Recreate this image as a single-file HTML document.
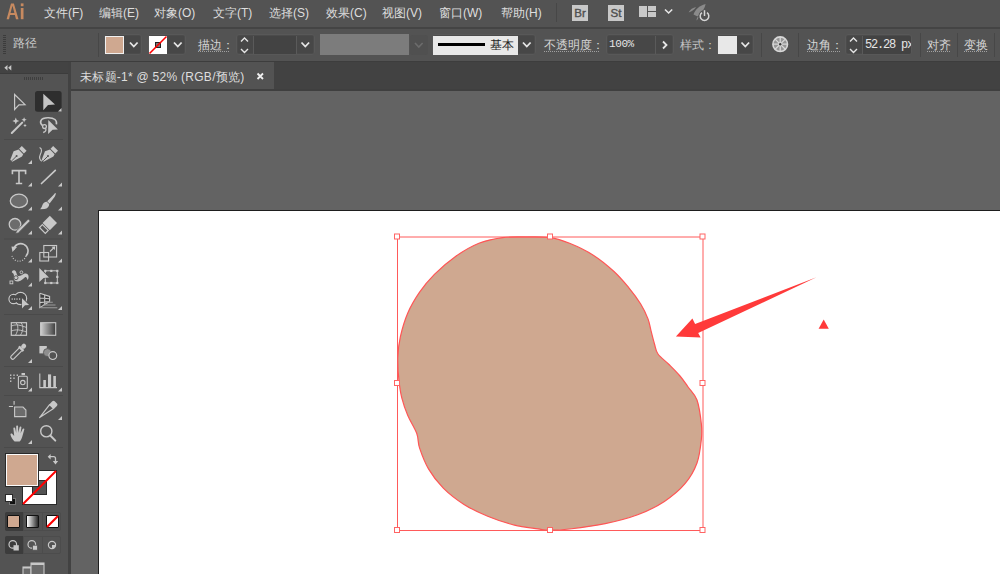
<!DOCTYPE html>
<html><head><meta charset="utf-8">
<style>
*{margin:0;padding:0;box-sizing:border-box}
html,body{width:1000px;height:574px;overflow:hidden}
body{background:#636363;font-family:"Liberation Sans",sans-serif;position:relative;color:#dcdcdc}
.a{position:absolute}
.mi{position:absolute;top:5px;font-size:12px;color:#dedede;white-space:nowrap;line-height:16px}
.cl{position:absolute;top:37px;font-size:12px;color:#d6d6d6;white-space:nowrap;line-height:16px}
.ul{position:absolute;top:51px;height:1px;background:repeating-linear-gradient(to right,#a0a0a0 0 1px,transparent 1px 2px)}
.box{position:absolute;background:#474747;border:1px solid #585858;box-shadow:inset 0 0 0 0.6px #505050;border-radius:3px}
.sep{position:absolute;width:1px;background:#474747}
.tsep{position:absolute;left:4px;width:59px;height:1px;background:#4a4a4a}
svg{position:absolute;overflow:visible}
</style></head><body>
<!-- menubar -->
<div class="a" style="left:0;top:0;width:1000px;height:27px;background:#535353"></div>
<div class="a" style="left:0;top:27px;width:1000px;height:2px;background:#444"></div>
<svg style="left:0;top:0" width="1" height="1"><g fill="#c78a60"><path d="M6.6,19.2 L11,3.4 L13.9,3.4 L18.5,19.2 L16,19.2 L14.9,15 L10,15 L9,19.2 Z M10.5,12.9 L14.4,12.9 L12.45,5.8 Z" fill-rule="evenodd"/><rect x="20.8" y="8" width="2.7" height="11.2"/><rect x="20.8" y="3.4" width="2.7" height="2.8"/></g></svg>
<div class="mi" style="left:44px">文件(F)</div>
<div class="mi" style="left:99px">编辑(E)</div>
<div class="mi" style="left:154px">对象(O)</div>
<div class="mi" style="left:213px">文字(T)</div>
<div class="mi" style="left:269px">选择(S)</div>
<div class="mi" style="left:326px">效果(C)</div>
<div class="mi" style="left:382px">视图(V)</div>
<div class="mi" style="left:439px">窗口(W)</div>
<div class="mi" style="left:501px">帮助(H)</div>
<!-- control bar -->
<div class="a" style="left:0;top:29px;width:1000px;height:32px;background:#535353"></div>
<div class="a" style="left:0;top:61px;width:1000px;height:1px;background:#3d3d3d"></div>
<!-- menubar right icons -->
<div class="a" style="left:556px;top:3px;width:1px;height:19px;background:#474747"></div>
<div class="a" style="left:572px;top:5px;width:16px;height:16px;background:#c8c8c8;color:#505050;-webkit-text-stroke:0.4px #505050;font-size:11.5px;line-height:17px;text-align:center">Br</div>
<div class="a" style="left:608px;top:5px;width:16px;height:16px;background:#c8c8c8;color:#505050;-webkit-text-stroke:0.4px #505050;font-size:11.5px;line-height:17px;text-align:center">St</div>
<div class="a" style="left:639px;top:6px;width:8px;height:11px;background:#c8c8c8"></div>
<div class="a" style="left:648px;top:6px;width:8px;height:5px;background:#c8c8c8"></div>
<div class="a" style="left:648px;top:12px;width:8px;height:5px;background:#c8c8c8"></div>
<svg style="left:0;top:0" width="1" height="1"><path d="M665,9.5 L668.6,13 L672.2,9.5" fill="none" stroke="#e6e6e6" stroke-width="1.6"/>
<path d="M693.5,14.5 C695,10 699,5.5 705.6,4 C705,8 702.5,12 697.5,16.5 Z" fill="#8a8a8a"/>
<path d="M688.6,12.6 C690,9.5 693,7.5 696.2,7 C694.5,9.5 692,11.5 688.6,12.6 Z" fill="#8a8a8a"/>
<path d="M696.6,20.5 C696.5,19 697,17.5 698.4,16.6 C698.5,18 698,19.5 696.6,20.5 Z" fill="#8a8a8a"/>
<circle cx="704.5" cy="16.1" r="6" fill="#535353"/>
<path d="M702,12.6 A4.3,4.3 0 1 0 707,12.6" fill="none" stroke="#d6d6d6" stroke-width="1.5"/>
<path d="M704.5,10.2 L704.5,16" stroke="#d6d6d6" stroke-width="1.5"/>
</svg>
<!-- control bar items -->
<div class="a" style="left:3px;top:35px;width:3px;height:19px;background:repeating-linear-gradient(to bottom,#3c3c3c 0 1px,transparent 1px 2px)"></div>
<div class="cl" style="left:13px;top:35px;color:#c8c8c8">路径</div>
<div class="sep" style="left:98px;top:33px;height:24px"></div>
<div class="box" style="left:104px;top:34px;width:38px;height:21px"></div>
<div class="a" style="left:105px;top:36px;width:19px;height:18px;background:#cfa890;border:1px solid #f0f0f0"></div>
<div class="box" style="left:148px;top:34px;width:38px;height:21px"></div>
<div class="a" style="left:149px;top:36px;width:18px;height:18px;background:#fff;overflow:hidden"></div>
<svg style="left:0;top:0" width="1" height="1">
<path d="M130,42.5 L133.8,46.5 L137.6,42.5" fill="none" stroke="#e6e6e6" stroke-width="1.8"/>
<path d="M174,42.5 L177.8,46.5 L181.6,42.5" fill="none" stroke="#e6e6e6" stroke-width="1.8"/>
<rect x="155.5" y="42.5" width="5" height="5" fill="#777" stroke="#222" stroke-width="1"/>
<path d="M149.5,53.5 L166.5,36.5" stroke="#f00" stroke-width="1.6"/>
</svg>
<div class="cl" style="left:198px">描边：</div><div class="ul" style="left:198px;width:31px"></div>
<div class="box" style="left:236px;top:34px;width:79px;height:21px"></div>
<div class="a" style="left:253px;top:36px;width:44px;height:18px;background:#434343;border-left:1px solid #5a5a5a;border-right:1px solid #5a5a5a"></div>
<svg style="left:0;top:0" width="1" height="1">
<path d="M241,41.5 L244.5,38 L248,41.5" fill="none" stroke="#e6e6e6" stroke-width="1.4"/>
<path d="M241,49 L244.5,52.5 L248,49" fill="none" stroke="#e6e6e6" stroke-width="1.4"/>
<path d="M301.5,42.5 L305.3,46.5 L309.1,42.5" fill="none" stroke="#e6e6e6" stroke-width="1.8"/>
</svg>
<div class="a" style="left:320px;top:34px;width:89px;height:21px;background:#7c7c7c"></div>
<div class="a" style="left:410px;top:35px;width:18px;height:20px;background:#505050;border-radius:3px"></div>
<svg style="left:0;top:0" width="1" height="1"><path d="M415,43 L418.8,47 L422.6,43" fill="none" stroke="#6c6c6c" stroke-width="1.6"/></svg>
<div class="box" style="left:432px;top:34px;width:104px;height:21px"></div>
<div class="a" style="left:433px;top:35.5px;width:85px;height:19px;background:#e8e8e8"></div>
<div class="a" style="left:438px;top:43px;width:47px;height:3px;background:#000"></div>
<div class="cl" style="left:490px;top:37px;color:#222">基本</div>
<svg style="left:0;top:0" width="1" height="1"><path d="M523,42.5 L526.8,46.5 L530.6,42.5" fill="none" stroke="#e6e6e6" stroke-width="1.8"/></svg>
<div class="cl" style="left:544px">不透明度：</div><div class="ul" style="left:544px;width:55px"></div>
<div class="box" style="left:606px;top:34px;width:68px;height:21px"></div>
<div class="a" style="left:655px;top:36px;width:1px;height:18px;background:#5a5a5a"></div>
<div class="a" style="left:609px;top:36px;font-family:'Liberation Mono',monospace;font-size:11px;letter-spacing:-0.4px;line-height:16px;color:#e6e6e6">100%</div>
<svg style="left:0;top:0" width="1" height="1"><path d="M663,41.5 L666.5,45 L663,48.5" fill="none" stroke="#e6e6e6" stroke-width="1.8"/></svg>
<div class="cl" style="left:680px;color:#c4c4c4">样式：</div>
<div class="box" style="left:717px;top:34px;width:37px;height:21px"></div>
<div class="a" style="left:718px;top:36px;width:19px;height:18px;background:#e8e8e8"></div>
<svg style="left:0;top:0" width="1" height="1"><path d="M741.5,42.5 L745.3,46.5 L749.1,42.5" fill="none" stroke="#e6e6e6" stroke-width="1.8"/></svg>
<div class="sep" style="left:761px;top:33px;height:24px"></div>
<svg style="left:0;top:0" width="1" height="1">
<circle cx="780.2" cy="44.2" r="7.3" fill="#959595" stroke="#d8d8d8" stroke-width="1.6"/>
<g stroke="#d8d8d8" stroke-width="1.3">
<path d="M780.2,37 V51.4 M773,44.2 H787.4 M775.1,39.1 L785.3,49.3 M785.3,39.1 L775.1,49.3"/>
</g>
<circle cx="780.2" cy="44.2" r="1.2" fill="#3a3a3a"/>
</svg>
<div class="sep" style="left:798px;top:33px;height:24px"></div>
<div class="cl" style="left:807px">边角：</div><div class="ul" style="left:807px;width:33px"></div>
<div class="box" style="left:845px;top:34px;width:67px;height:21px"></div>
<div class="a" style="left:862px;top:36px;width:49px;height:18px;background:#434343;border-left:1px solid #5a5a5a;border-radius:0 2px 2px 0"></div>
<svg style="left:0;top:0" width="1" height="1">
<path d="M850,41.5 L853.5,38 L857,41.5" fill="none" stroke="#e6e6e6" stroke-width="1.4"/>
<path d="M850,49 L853.5,52.5 L857,49" fill="none" stroke="#e6e6e6" stroke-width="1.4"/>
</svg>
<div class="a" style="left:865px;top:37px;font-family:'Liberation Mono',monospace;font-size:12px;letter-spacing:-1.2px;line-height:16px;color:#e6e6e6;width:46px;overflow:hidden;white-space:nowrap">52.28 px</div>
<div class="sep" style="left:920px;top:33px;height:24px"></div>
<div class="cl" style="left:927px">对齐</div><div class="ul" style="left:927px;width:24px"></div>
<div class="sep" style="left:957px;top:33px;height:24px"></div>
<div class="cl" style="left:964px">变换</div><div class="ul" style="left:964px;width:24px"></div>
<div class="sep" style="left:994px;top:33px;height:24px"></div>
<!-- left panel -->
<div class="a" style="left:0;top:62px;width:68px;height:11px;background:#434343"></div>
<div class="a" style="left:0;top:73px;width:68px;height:1px;background:#3c3c3c"></div>
<div class="a" style="left:0;top:74px;width:68px;height:500px;background:#535353"></div>
<div class="a" style="left:68px;top:62px;width:3px;height:512px;background:#424242"></div>
<!-- tools -->
<div class="a" style="left:4px;top:66px;width:8px;height:5px"></div>
<svg style="left:0;top:0" width="1" height="1">
<path d="M7.5,65 L4.3,67.7 L7.5,70.4 Z M11.3,65 L8.1,67.7 L11.3,70.4 Z" fill="#c8c8c8"/>
<rect x="23" y="77" width="20" height="3" fill="url(#grip)"/>
<defs><pattern id="grip" width="2" height="3" patternUnits="userSpaceOnUse"><rect width="1" height="3" fill="#3e3e3e"/></pattern></defs>
<g fill="#4a4a4a">
<rect x="4" y="139" width="59" height="1"/>
<rect x="4" y="238.5" width="59" height="1"/>
<rect x="4" y="314" width="59" height="1"/>
<rect x="4" y="366" width="59" height="1"/>
<rect x="4" y="395" width="59" height="1"/>
<rect x="4" y="447" width="59" height="1"/>
</g>
<rect x="35" y="91" width="26.6" height="20.7" rx="2.5" fill="#2e2e2e"/>
<g fill="#c8c8c8" stroke="none">
<path d="M58,111.5 L61.5,111.5 L61.5,108 Z"/>
<path d="M28,164 L32,164 L32,160 Z"/>
<path d="M28,186.5 L32,186.5 L32,182.5 Z"/><path d="M58,186.5 L62,186.5 L62,182.5 Z"/>
<path d="M28,210.5 L32,210.5 L32,206.5 Z"/><path d="M58,210.5 L62,210.5 L62,206.5 Z"/>
<path d="M28,234.5 L32,234.5 L32,230.5 Z"/><path d="M58,234.5 L62,234.5 L62,230.5 Z"/>
<path d="M28,262.5 L32,262.5 L32,258.5 Z"/><path d="M58,262.5 L62,262.5 L62,258.5 Z"/>
<path d="M28,286.5 L32,286.5 L32,282.5 Z"/>
<path d="M28,310 L32,310 L32,306 Z"/><path d="M58,310 L62,310 L62,306 Z"/>
<path d="M28,363 L32,363 L32,359 Z"/>
<path d="M28,391.5 L32,391.5 L32,387.5 Z"/><path d="M58,391.5 L62,391.5 L62,387.5 Z"/>
<path d="M58,420 L62,420 L62,416 Z"/>
<path d="M28,444 L32,444 L32,440 Z"/>
</g>
<!-- row1 -->
<path d="M14.6,94.5 L25,104.6 L19,104.8 L14.6,109.5 Z" fill="none" stroke="#c8c8c8" stroke-width="1.2" stroke-linejoin="miter"/>
<path d="M43.3,93.7 L55,104.5 L48,105 L43.3,110.2 Z" fill="#c4c4c4"/>
<!-- row2 magic wand -->
<path d="M11.8,133 L22.2,122.6" stroke="#c8c8c8" stroke-width="2" stroke-linecap="round"/>
<path d="M15.8,117.5 L16.8,120 L19.3,121 L16.8,122 L15.8,124.5 L14.8,122 L12.3,121 L14.8,120 Z" fill="#c8c8c8"/>
<path d="M24.1,117.2 L24.9,119 L26.7,119.8 L24.9,120.6 L24.1,122.4 L23.3,120.6 L21.5,119.8 L23.3,119 Z" fill="#c8c8c8"/>
<path d="M25,123.8 L25.6,125 L26.8,125.5 L25.6,126 L25,127.2 L24.4,126 L23.2,125.5 L24.4,125 Z" fill="#c8c8c8"/>
<!-- lasso -->
<path d="M42.6,125.6 C39,122.5 40,117.8 48,117.7 C54.5,117.6 57.2,120.4 56.4,124.4" fill="none" stroke="#c8c8c8" stroke-width="1.6"/>
<circle cx="44.5" cy="126.6" r="1.9" fill="none" stroke="#c8c8c8" stroke-width="1.3"/>
<path d="M45.4,128.2 C46.6,130 45.8,131.8 43.2,132.5" fill="none" stroke="#c8c8c8" stroke-width="1.3"/>
<path d="M48.3,120 L57.9,129.5 L52.6,129.8 L48.1,133.9 Z" fill="#c8c8c8" stroke="#535353" stroke-width="1.2" paint-order="stroke"/>
<!-- row3 pen -->
<g fill="#c8c8c8">
<path d="M21.8,146 L26.6,150.8 L23.9,153.5 L19.1,148.7 Z"/>
<path d="M18.6,149.6 L23.2,154.2 L22,156.4 L12.3,161.8 L10.3,159.7 L13.6,151.3 Z"/>
<path d="M53.2,146 L58,150.8 L55.3,153.5 L50.5,148.7 Z"/>
<path d="M50,149.6 L54.6,154.2 L53.4,156.4 L43.7,161.8 L41.7,159.7 L45,151.3 Z"/>
</g>
<path d="M11.8,160.8 L16.6,156" stroke="#535353" stroke-width="1"/>
<circle cx="16.6" cy="156" r="1" fill="#535353"/>
<path d="M43.2,160.8 L48,156" stroke="#535353" stroke-width="1"/>
<circle cx="48" cy="156" r="1" fill="#535353"/>
<path d="M39.6,147.4 C42.5,148.5 41.5,152 40.3,154.5 C39,157.5 40,160 41.8,161.3" fill="none" stroke="#c8c8c8" stroke-width="1.1"/>
<!-- row4 type -->
<path d="M12.4,174.3 L12.4,170.6 L25.6,170.6 L25.6,174.3 M19,170.6 L19,183.5 M15.8,183.5 L22.2,183.5" fill="none" stroke="#c8c8c8" stroke-width="1.6"/>
<path d="M41.5,183.5 L55.3,170.3" stroke="#c8c8c8" stroke-width="1.7" stroke-linecap="round"/>
<!-- row5 ellipse / brush -->
<ellipse cx="18.9" cy="200.9" rx="8.6" ry="6.7" fill="#6c6c6c" stroke="#c8c8c8" stroke-width="1.3"/>
<path d="M55.6,193 C56.3,193.6 55.5,196 53,199 L49.6,203.4 L47.2,201.2 L51.5,197 C54,194.5 55,192.6 55.6,193 Z" fill="#c8c8c8"/>
<path d="M46.8,201.8 L49.2,204 C49.3,206.5 47.5,208.6 44.5,209 L40.2,209.2 C41.5,208 42,206 42.8,204.3 C43.6,202.6 45.3,201.6 46.8,201.8 Z" fill="#c8c8c8"/>
<!-- row6 shaper / eraser -->
<circle cx="15" cy="224.3" r="5.8" fill="#6c6c6c" stroke="#c8c8c8" stroke-width="1.3"/>
<path d="M28.3,219 L30.3,221 L18.4,232.9 L15.6,233.6 L16.4,230.9 Z" fill="#c8c8c8" stroke="#535353" stroke-width="0.8"/>
<path d="M49.8,215.8 L57,223 L49.8,230.2 L42.6,223 Z" fill="#c8c8c8"/>
<path d="M42.4,224.6 L48.2,230.4 L45.3,233.3 L39.5,227.5 Z" fill="none" stroke="#c8c8c8" stroke-width="1.2"/>
<!-- row7 rotate / scale -->
<path d="M13.5,250 A7.3,7.3 0 1 1 26,256" fill="none" stroke="#c8c8c8" stroke-width="1.6"/>
<path d="M11.5,246.5 L17,247 L12.5,252 Z" fill="#c8c8c8"/>
<path d="M26,256 A7.3,7.3 0 0 1 12,256" fill="none" stroke="#c8c8c8" stroke-width="1.2" stroke-dasharray="1,1.5"/>
<rect x="43.8" y="245.5" width="12.8" height="11.5" fill="none" stroke="#c8c8c8" stroke-width="1.1"/>
<rect x="39.8" y="252.5" width="8.8" height="8.5" fill="none" stroke="#c8c8c8" stroke-width="1.1"/>
<path d="M50,251.5 L54.6,247" stroke="#c8c8c8" stroke-width="1.1"/>
<path d="M55.2,246.4 L51.5,246.8 L54.8,250.1 Z" fill="#c8c8c8"/>
<!-- row8 puppet / free transform -->
<path d="M11.8,272.3 C12,269.8 14.8,269.4 15.9,271.6 C16.8,273.6 16.8,275.2 18.2,276 C20.2,276.4 22.2,274.8 24,273.8 C26.2,272.8 28.2,273.8 28.5,276 C28.7,278 28.2,279.4 27.6,280 C27.2,278.2 26.4,276.6 25.2,277 C23.6,278.4 21.6,281 18.2,281.4 C15.2,281.6 13.6,280.2 13.8,278.2 C14,276 14.6,274 11.8,272.3 Z" fill="#c8c8c8"/>
<circle cx="16" cy="277.7" r="2" fill="#c8c8c8" stroke="#535353" stroke-width="0.9"/>
<path d="M17.5,276.2 L20.4,273.3" stroke="#535353" stroke-width="0.9"/>
<circle cx="21.4" cy="272.3" r="1.4" fill="#535353" stroke="#c8c8c8" stroke-width="0.9"/>
<rect x="10" y="281" width="2.8" height="2.8" fill="#535353" stroke="#c8c8c8" stroke-width="0.9"/>
<rect x="45.3" y="270.8" width="12" height="12.2" fill="none" stroke="#c8c8c8" stroke-width="1"/>
<g fill="#c8c8c8"><rect x="44.2" y="269.8" width="2.2" height="2.2"/><rect x="50.2" y="269.8" width="2.2" height="2.2"/><rect x="56.2" y="269.8" width="2.2" height="2.2"/><rect x="56.2" y="275.8" width="2.2" height="2.2"/><rect x="44.2" y="281.9" width="2.2" height="2.2"/><rect x="50.2" y="281.9" width="2.2" height="2.2"/><rect x="56.2" y="281.9" width="2.2" height="2.2"/></g>
<path d="M39.3,268 L49,277.5 L43.6,277.9 L39.3,282 Z" fill="#c8c8c8" stroke="#535353" stroke-width="1.4" paint-order="stroke"/>
<!-- row9 shape builder / perspective -->
<circle cx="13.6" cy="299" r="4.6" fill="none" stroke="#c8c8c8" stroke-width="1.3"/>
<circle cx="20.5" cy="298.4" r="6.1" fill="none" stroke="#c8c8c8" stroke-width="1.3"/>
<circle cx="13.6" cy="299" r="3.95" fill="#4a4a4a"/>
<circle cx="20.5" cy="298.4" r="5.45" fill="#4a4a4a"/>
<g fill="#c8c8c8"><rect x="11.6" y="298.4" width="1.2" height="1.3"/><rect x="14" y="298.4" width="1.2" height="1.3"/><rect x="16.4" y="298.4" width="1.2" height="1.3"/><rect x="19" y="298.4" width="1.2" height="1.3"/></g>
<path d="M22,298.2 L29.1,304.9 L25,305.3 L22,308.6 Z" fill="#c8c8c8" stroke="#535353" stroke-width="1.2" paint-order="stroke"/>
<path d="M39.8,293.2 L49.6,296.4 L49.6,301.5 L39.8,307.6 Z" fill="#3e3e3e"/>
<path d="M39.8,293.2 L49.6,296.4 L49.6,301.5 M39.8,293.2 L39.8,307.6 L49.6,301.5 M44.7,294.8 L44.7,304.6 M39.8,298 L49.6,298.8 M39.8,302.6 L49.6,301.5" fill="none" stroke="#c8c8c8" stroke-width="1.1"/>
<path d="M45,302.2 L52.8,302.2 M43,305 L55.5,305 M40.5,307.7 L57.3,307.7" stroke="#9a9a9a" stroke-width="1.1"/>
<!-- row10 mesh / gradient -->
<rect x="11.3" y="322.7" width="15.2" height="12.6" fill="none" stroke="#c8c8c8" stroke-width="1.2"/>
<path d="M11.5,326 C16,324 20,325 26.5,327.5 M11.5,331 C16,329 21,330 26.5,332 M16,322.8 C19,326 18,331 15.5,335.2 M21,322.8 C24,326 23,331 20.5,335.2" fill="none" stroke="#c8c8c8" stroke-width="0.9"/>
<defs><linearGradient id="gr" x1="0" x2="1"><stop offset="0" stop-color="#d0d0d0"/><stop offset="1" stop-color="#3c3c3c"/></linearGradient></defs>
<rect x="40.6" y="322.7" width="15.1" height="12.6" fill="url(#gr)" stroke="#c8c8c8" stroke-width="1.1"/>
<!-- row11 eyedropper / blend -->
<g transform="translate(24.6,345.3) rotate(45)">
<rect x="-2.2" y="-1.2" width="4.4" height="5" rx="2" fill="#c8c8c8"/>
<rect x="-3.3" y="3.6" width="6.6" height="2.4" rx="0.6" fill="#c8c8c8"/>
<path d="M-1.9,6 L-1.9,17.2 C-1.9,19.2 1.9,19.2 1.9,17.2 L1.9,6" fill="none" stroke="#c8c8c8" stroke-width="1.2"/>
</g>
<rect x="39.4" y="346" width="7.4" height="7.4" fill="#c8c8c8"/>
<circle cx="47.4" cy="352.6" r="4" fill="#8e8e8e" stroke="#535353" stroke-width="0.8"/>
<circle cx="52.8" cy="355.6" r="3.9" fill="#535353" stroke="#c8c8c8" stroke-width="1.2"/>
<!-- row12 symbol sprayer / graph -->
<g fill="#c8c8c8">
<rect x="10" y="374.5" width="1.4" height="1.4"/><rect x="13.3" y="374.5" width="1.4" height="1.4"/><rect x="16.6" y="374.5" width="1.4" height="1.4"/>
<rect x="10" y="377.5" width="1.4" height="1.4"/><rect x="13.3" y="377.5" width="1.4" height="1.4"/>
<rect x="10" y="380.5" width="1.4" height="1.4"/>
<rect x="21.5" y="373" width="3.5" height="2.2"/>
</g>
<rect x="18.4" y="376.3" width="8.9" height="12.2" rx="1" fill="none" stroke="#c8c8c8" stroke-width="1.1"/>
<circle cx="22.8" cy="382.6" r="2.2" fill="none" stroke="#c8c8c8" stroke-width="1.1"/>
<path d="M39.8,373.4 L39.8,387.6 L57,387.6" fill="none" stroke="#c8c8c8" stroke-width="1.1"/>
<rect x="43.3" y="380" width="2.6" height="7.5" fill="#c8c8c8"/>
<rect x="48" y="374.4" width="3.1" height="13.1" fill="#c8c8c8"/>
<rect x="53.3" y="376" width="2.6" height="11.5" fill="#c8c8c8"/>
<!-- row13 artboard / slice -->
<path d="M14.1,401 L14.1,404.8 M8.9,406.5 L13,406.5" stroke="#c8c8c8" stroke-width="1.1"/>
<path d="M14.6,407 L23,407 L25.9,410 L25.9,416.6 L14.6,416.6 Z" fill="#6c6c6c" stroke="#c8c8c8" stroke-width="1.1"/>
<path d="M49.6,404.6 L53.6,408.6 L39.6,417.6 Z" fill="none" stroke="#c8c8c8" stroke-width="1.2" stroke-linejoin="round"/>
<path d="M52.3,401.3 C53,400.6 54,400.6 54.7,401.3 L56.9,403.5 C57.6,404.2 57.6,405.2 56.9,405.9 L53.8,409 L49.2,404.4 Z" fill="#c8c8c8"/>
<!-- row14 hand / zoom -->
<path d="M14.6,441.6 C12.6,439.6 11,437 10.5,434.8 C10.2,433.6 11.6,433 12.4,434 L14.2,436 L13.4,428.5 C13.2,427.2 15,427 15.2,428.2 L16.2,433 L16.2,426.4 C16.2,425.1 18.1,425.1 18.1,426.4 L18.2,432.8 L19.6,427.2 C19.9,426 21.6,426.3 21.4,427.6 L20.6,433.2 L22.6,429 C23.1,427.9 24.7,428.4 24.3,429.6 L22.6,435.5 C22,438 21,440.3 19.6,441.6 Z" fill="#c8c8c8"/>
<circle cx="46.3" cy="431.3" r="5.6" fill="none" stroke="#c8c8c8" stroke-width="1.4"/>
<path d="M50.3,435.5 L55.3,440.6" stroke="#c8c8c8" stroke-width="2" stroke-linecap="round"/>
</svg>
<!-- color swatches -->
<svg style="left:0;top:0" width="1" height="1">
<path d="M50,456.7 L53.6,456.7 C54.8,456.7 55.5,457.4 55.5,458.6 L55.5,461.5" fill="none" stroke="#c8c8c8" stroke-width="1.3"/>
<path d="M47.7,456.7 L50.6,454 L50.6,459.4 Z" fill="#c8c8c8"/>
<path d="M52.8,461 L58.1,461 L55.5,464.6 Z" fill="#c8c8c8"/>
</svg>
<div class="a" style="left:22px;top:470px;width:35px;height:35px;background:#2a2a2a"></div>
<div class="a" style="left:23px;top:471px;width:33px;height:33px;background:#fff"></div>
<div class="a" style="left:32px;top:480px;width:15px;height:15px;background:#535353;border:1px solid #2a2a2a"></div>
<svg style="left:0;top:0" width="1" height="1"><path d="M23,504 L56,471" stroke="#f00" stroke-width="2"/></svg>
<div class="a" style="left:4.5px;top:452.5px;width:34.5px;height:34.5px;background:#2a2a2a"></div>
<div class="a" style="left:5.5px;top:453.5px;width:32.5px;height:32.5px;background:#fbfbfb"></div>
<div class="a" style="left:6.5px;top:454.5px;width:30.5px;height:30.5px;background:#cfa890"></div>
<div class="a" style="left:8.5px;top:497.5px;width:7px;height:7px;background:#111;border:1px solid #777"></div>
<div class="a" style="left:4.5px;top:493.5px;width:8px;height:8px;background:#fff;border:1px solid #2a2a2a"></div>
<!-- mode buttons -->
<div class="a" style="left:5px;top:512px;width:56px;height:19px;border:1px solid #4c4c4c;border-radius:2px"></div>
<div class="a" style="left:5px;top:512px;width:18px;height:19px;background:#3c3c3c;border-radius:2px 0 0 2px"></div>
<div class="a" style="left:42px;top:512px;width:1px;height:19px;background:#4c4c4c"></div>
<div class="a" style="left:23px;top:512px;width:1px;height:19px;background:#4c4c4c"></div>
<div class="a" style="left:7px;top:515px;width:13px;height:13px;background:#cfa890;border:1px solid #111;border-radius:1px"></div>
<div class="a" style="left:26px;top:515px;width:13px;height:13px;background:linear-gradient(to right,#fff,#2a2a2a);border:1px solid #111;border-radius:1px"></div>
<div class="a" style="left:46px;top:515px;width:13px;height:13px;background:#fff;border:1px solid #111;border-radius:1px;overflow:hidden"></div>
<svg style="left:0;top:0" width="1" height="1"><path d="M47,527 L58,516" stroke="#f00" stroke-width="2.2"/></svg>
<div class="a" style="left:5px;top:536px;width:56px;height:18px;border:1px solid #4c4c4c;border-radius:2px"></div>
<div class="a" style="left:5px;top:536px;width:18px;height:18px;background:#3c3c3c;border-radius:2px 0 0 2px"></div>
<div class="a" style="left:23px;top:536px;width:1px;height:18px;background:#4c4c4c"></div>
<div class="a" style="left:42px;top:536px;width:1px;height:18px;background:#4c4c4c"></div>
<svg style="left:0;top:0" width="1" height="1">
<circle cx="12.8" cy="544.4" r="3.8" fill="none" stroke="#c8c8c8" stroke-width="1.2"/>
<rect x="13.5" y="545.2" width="5.3" height="5.3" fill="#c8c8c8"/>
<circle cx="31.8" cy="544.4" r="3.8" fill="none" stroke="#c8c8c8" stroke-width="1.2"/>
<rect x="32.5" y="545.2" width="5" height="5" fill="#c8c8c8" stroke="#535353" stroke-width="0.8"/>
<circle cx="52" cy="545" r="3.6" fill="none" stroke="#c8c8c8" stroke-width="1.2"/>
<path d="M52,545 L55.6,545 A3.6,3.6 0 0 1 52,548.6 Z" fill="#c8c8c8"/>
<!-- screen mode -->
<rect x="23" y="567" width="8" height="8" fill="#6a6a6a" stroke="#c8c8c8" stroke-width="1.1"/>
<rect x="31" y="563" width="13" height="12" fill="#6a6a6a" stroke="#c8c8c8" stroke-width="1.1"/>
<rect x="31" y="563" width="13" height="2" fill="#c8c8c8"/>
<rect x="23" y="567" width="8" height="1.5" fill="#c8c8c8"/>
</svg>
<!-- tab bar -->
<div class="a" style="left:71px;top:62px;width:929px;height:27px;background:#424242"></div>
<div class="a" style="left:71px;top:62px;width:203px;height:27px;background:#535353"></div>
<div class="a" style="left:71px;top:89px;width:929px;height:2px;background:#3f3f3f"></div>
<div class="a" style="left:80px;top:69px;font-size:12px;letter-spacing:0.27px;color:#dedede;line-height:16px;white-space:nowrap">未标题-1* @ 52% (RGB/预览)</div>
<svg style="left:0;top:0" width="1" height="1"><path d="M257.5,73.5 L263,79 M263,73.5 L257.5,79" stroke="#f0f0f0" stroke-width="1.8"/></svg>
<!-- artboard -->
<div class="a" style="left:98px;top:210px;width:910px;height:380px;background:#fff;border-left:1px solid #1e1e1e;border-top:1px solid #1e1e1e"></div>
<svg width="1000" height="574" style="left:0;top:0">
<path d="M526.3,236.9 C534.2,236.9 542.8,236.5 550.0,237.6 C557.2,238.7 562.4,240.4 569.6,243.3 C576.8,246.2 585.9,250.5 593.3,255.2 C600.7,259.9 608.1,266.1 614.0,271.5 C619.9,276.9 624.4,282.4 628.9,287.8 C633.4,293.2 637.5,298.8 640.7,304.0 C643.9,309.2 646.3,314.4 648.0,318.9 C649.7,323.3 649.9,326.5 651.0,330.7 C652.1,334.9 653.3,340.1 654.5,344.0 C655.7,347.9 655.6,350.6 658.0,354.0 C660.4,357.4 665.3,360.8 669.0,364.5 C672.7,368.2 676.8,372.2 680.0,376.0 C683.2,379.8 685.3,383.0 688.1,387.0 C690.9,391.0 694.8,393.8 697.0,400.0 C699.2,406.2 700.7,417.9 701.4,424.4 C702.1,430.9 702.1,432.6 701.4,439.0 C700.7,445.4 699.7,455.6 697.0,463.0 C694.3,470.4 690.4,477.3 685.0,483.7 C679.6,490.1 672.3,496.2 664.4,501.4 C656.5,506.6 647.6,511.1 637.7,514.8 C627.8,518.5 616.6,521.3 605.2,523.7 C593.9,526.1 579.0,527.9 569.6,529.0 C560.2,530.1 554.3,530.2 549.0,530.2 C543.7,530.2 543.8,529.8 538.0,528.9 C532.2,528.0 522.8,527.2 514.4,525.1 C506.0,523.0 496.1,519.8 487.7,516.3 C479.3,512.8 471.4,509.1 464.0,504.4 C456.6,499.7 449.2,494.0 443.3,488.1 C437.4,482.2 432.4,475.6 428.5,468.9 C424.6,462.2 421.6,454.0 419.6,448.1 C417.6,442.2 418.7,438.7 416.7,433.3 C414.7,427.9 410.3,421.4 407.8,415.5 C405.3,409.6 403.3,403.7 401.8,397.8 C400.3,391.9 399.6,386.7 398.9,380.0 C398.2,373.3 397.6,364.6 397.8,357.4 C398.1,350.2 398.7,344.0 400.4,336.6 C402.1,329.2 404.6,320.4 407.8,313.0 C411.0,305.6 415.2,298.6 419.6,292.2 C424.0,285.8 428.5,280.3 434.4,274.4 C440.3,268.5 447.8,261.9 455.2,256.7 C462.6,251.5 471.0,246.5 478.9,243.3 C486.8,240.1 494.7,238.7 502.6,237.6 C510.5,236.5 518.4,236.9 526.3,236.9Z" fill="#cfa890" stroke="#ff5555" stroke-width="1.2"/>
<path d="M397.5,237 H703 M397.5,530.5 H703 M397.5,237 V530.5 M703,237 V530.5" fill="none" stroke="#ff5a5a" stroke-width="1"/>
<path d="M816.5,277.2 L695.1,323.9 L692.4,318.4 L675.9,336.5 L700.6,337.6 L698.2,333 Z" fill="#ff3a3a"/>
<path d="M823.7,319.4 L828.8,328.8 L818.6,328.8 Z" fill="#ff3a3a"/>
<g fill="#fff" stroke="#ff6464" stroke-width="1">
<rect x="394.5" y="234" width="5" height="5"/>
<rect x="547.5" y="234" width="5" height="5"/>
<rect x="700" y="234" width="5" height="5"/>
<rect x="394.5" y="380.5" width="5" height="5"/>
<rect x="700" y="380.5" width="5" height="5"/>
<rect x="394.5" y="527.5" width="5" height="5"/>
<rect x="547.5" y="527.5" width="5" height="5"/>
<rect x="700" y="527.5" width="5" height="5"/>
</g>
</svg>
</body></html>
